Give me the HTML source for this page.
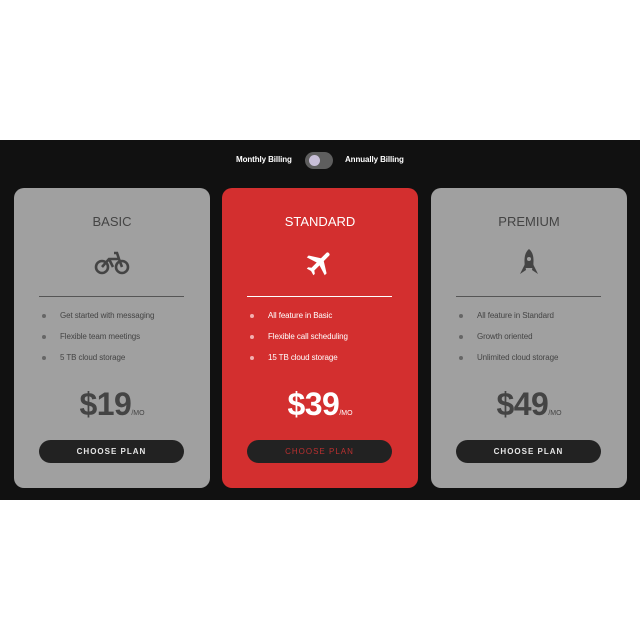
<!DOCTYPE html>
<html><head><style>
*{margin:0;padding:0;box-sizing:border-box}
body{width:640px;height:640px;background:#fff;font-family:"Liberation Sans",sans-serif;position:relative;overflow:hidden}
.band{position:absolute;left:0;top:140px;width:640px;height:360px;background:#111}
.tog{position:absolute;top:155px;font-size:8px;font-weight:bold;color:#fff;letter-spacing:-0.1px}
.track{position:absolute;left:305px;top:152px;width:28px;height:17px;border-radius:9px;background:#5e5e5e}
.knob{position:absolute;left:309px;top:155px;width:11px;height:11px;border-radius:50%;background:#c8bfd8}
.card{position:absolute;top:188px;width:196px;height:300px;border-radius:10px;background:#a0a0a0;color:#444}
.card.red{background:#d32f2f;color:#fff}
.t{position:absolute;width:100%;text-align:center;font-size:13px}
.ic{position:absolute;left:0;width:100%;display:flex;justify-content:center}
.hr{position:absolute;left:25px;top:108px;width:145px;height:1px;background:#555}
.red .hr{background:#fff}
ul{position:absolute;left:26px;top:122px;list-style:none;font-size:8px;letter-spacing:-0.1px}
li{height:21px;position:relative;padding-left:20px;line-height:11px}
li:before{content:"";position:absolute;left:2px;top:4px;width:4px;height:4px;border-radius:50%;background:#666}
.red li:before{background:#f3b0b0}
.p{position:absolute;top:198px;width:100%;text-align:center;font-size:32px;font-weight:bold;color:#444;letter-spacing:-0.5px}
.red .p{color:#fff}
.p small{font-size:7px;font-weight:normal;letter-spacing:0}
.b{position:absolute;left:25px;top:252px;width:145px;height:23px;border-radius:12px;background:#222;color:#e6e6e6;font-size:8px;font-weight:bold;letter-spacing:1px;text-align:center;line-height:23px}
.red .b{color:#b93030;font-weight:normal}
</style></head><body>
<div class="band"></div>
<div class="tog" style="left:236px">Monthly Billing</div>
<div class="track"></div><div class="knob"></div>
<div class="tog" style="left:345px">Annually Billing</div>

<div class="card" style="left:14px">
<div class="t" style="top:26px">BASIC</div>
<div class="ic" style="top:62px"><svg width="36" height="26" viewBox="0 0 36 26" fill="none" stroke="#444" stroke-width="2.6"><circle cx="8" cy="17" r="6"/><circle cx="28" cy="17" r="6"/><path d="M8 17 L15 9 L25 9 L28 17 M15 9 L19 17 M20 3 L23 3 L25 9"/></svg></div>
<div class="hr"></div>
<ul><li>Get started with messaging</li><li>Flexible team meetings</li><li>5 TB cloud storage</li></ul>
<div class="p">$19<small>/MO</small></div>
<div class="b">CHOOSE PLAN</div>
</div>

<div class="card red" style="left:222px">
<div class="t" style="top:26px">STANDARD</div>
<div class="ic" style="top:59px"><svg width="32" height="32" viewBox="0 0 24 24" fill="#fff"><path d="M21 16v-2l-8-5V3.5A1.5 1.5 0 0 0 10 3.5V9l-8 5v2l8-2.5V19l-2 1.5V22l3.5-1 3.5 1v-1.5L13 19v-5.5z" transform="rotate(45 12 12)"/></svg></div>
<div class="hr"></div>
<ul><li>All feature in Basic</li><li>Flexible call scheduling</li><li>15 TB cloud storage</li></ul>
<div class="p">$39<small>/MO</small></div>
<div class="b">CHOOSE PLAN</div>
</div>

<div class="card" style="left:431px">
<div class="t" style="top:26px">PREMIUM</div>
<div class="ic" style="top:60px"><svg width="24" height="30" viewBox="0 0 24 30" fill="#444"><path d="M12 1 C7 5 7 12 8 20 L16 20 C17 12 17 5 12 1z"/><path d="M8 16 L3 26 L9 22z M16 16 L21 26 L15 22z"/><circle cx="12" cy="11" r="2" fill="#a0a0a0"/></svg></div>
<div class="hr"></div>
<ul><li>All feature in Standard</li><li>Growth oriented</li><li>Unlimited cloud storage</li></ul>
<div class="p">$49<small>/MO</small></div>
<div class="b">CHOOSE PLAN</div>
</div>
</body></html>
